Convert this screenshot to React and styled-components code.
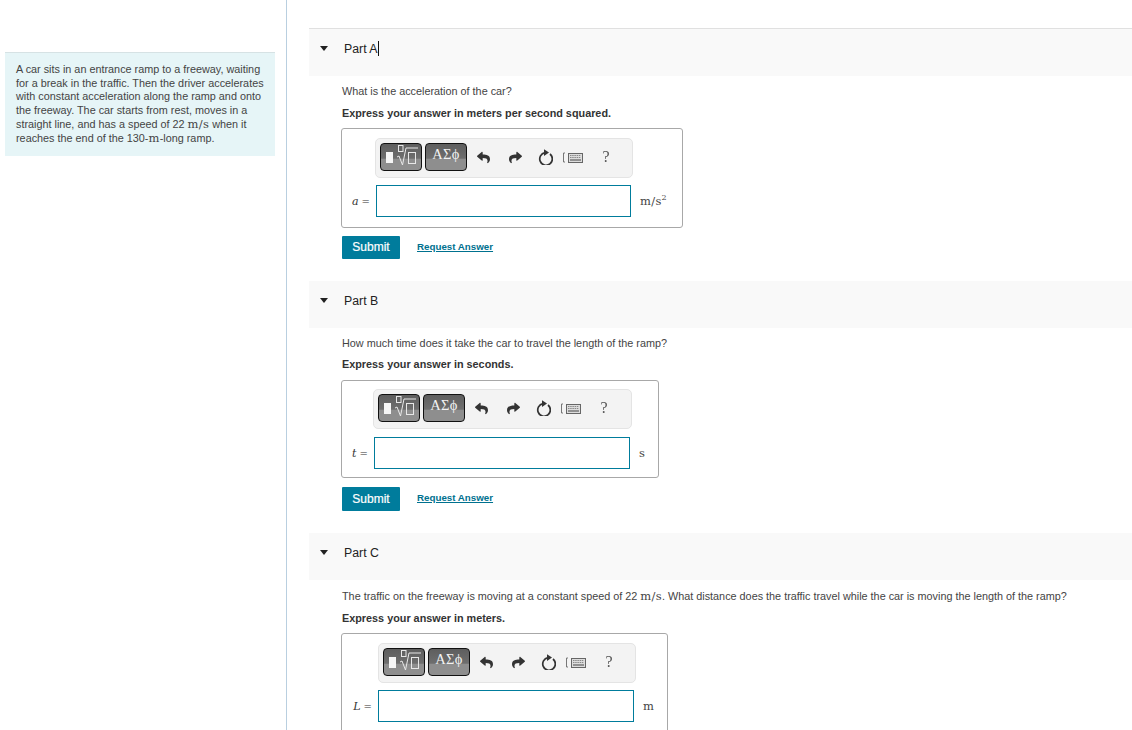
import React from 'react';
import styled, {createGlobalStyle} from 'styled-components';
import {FaReply, FaShare} from 'react-icons/fa';

const Global = createGlobalStyle`
    html, body {
        margin:0;
        height:730px;
        overflow:hidden;
        background:white;
        font-family:"Liberation Sans", Arial, sans-serif;
    }
`
const Page = styled.div`
    display:flex;
    height:730px;
`
const Sidebar = styled.aside`
    width:287px;
    height:100%;
    padding:52px 11px 0 5px;
    box-sizing:border-box;
    border-right:1px solid #b9cfe0;
    flex-shrink:0;
`
const Intro = styled.div`
    background:#e6f5f7;
    border-top:1px solid #d6e2e4;
    padding:10px 11px 10px;
    font-size:10.83px;
    line-height:13.5px;
    color:#444;
`
const Main = styled.main`
    flex:1;
    padding:28px 0 0 22px;
    min-width:0;
`
const Section = styled.section`
    margin-bottom:${props => props.$gap}px;
`
const PartHeader = styled.div`
    box-sizing:border-box;
    height:${props => props.$first ? 48 : 47}px;
    display:flex;
    align-items:center;
    background:#f9f9f9;
    border-top:${props => props.$first ? '1px solid #e0e0e0' : 'none'};
    padding:0 0 8px 11px;
    font-size:12.3px;
    color:#222;
`
const Caret = styled.span`
    width:0;
    height:0;
    border-left:4.5px solid transparent;
    border-right:4.5px solid transparent;
    border-top:5px solid #222;
    margin-right:16px;
`
const Cursor = styled.span`
    display:inline-block;
    width:1px;
    height:15px;
    background:#111;
    vertical-align:-3px;
`
const Body = styled.div`
    padding:${props => props.$top}px 0 0 33px;
`
const Question = styled.p`
    margin:0 0 ${props => props.$after}px;
    font-size:10.83px;
    line-height:13px;
    color:#444;
`
const Instruction = styled.p`
    margin:0 0 ${props => props.$after}px;
    font-size:10.83px;
    line-height:13px;
    font-weight:bold;
    color:#333;
`
const AnswerBox = styled.div`
    box-sizing:border-box;
    width:${props => props.$width}px;
    margin-left:-1px;
    border:1px solid #a8a8a8;
    border-radius:3px;
    padding:${props => props.$pad}px 0 ${props => props.$bottom}px;
    display:grid;
    grid-template-columns:${props => props.$label}px auto 1fr;
    row-gap:${props => props.$rowGap}px;
    background:white;
`
const Toolbar = styled.div`
    grid-column:2 / 4;
    box-sizing:border-box;
    width:${props => props.$width}px;
    height:40px;
    background:#f3f3f3;
    border:1px solid #e4e4e4;
    border-radius:5px;
    display:flex;
    align-items:center;
    padding:0 0 2px 4px;
    margin-left:${props => props.$shift}px;
`
const PaletteBtn = styled.div`
    box-sizing:border-box;
    width:42px;
    height:28px;
    margin-right:3px;
    border:1px solid #111;
    border-radius:4px;
    background:linear-gradient(#5e5e5e 0, #6e6e6e 55%, #8e8e8e 58%, #8e8e8e 100%);
    color:#f2f2f2;
    display:flex;
    align-items:flex-start;
    justify-content:center;
    overflow:hidden;
`
const Greek = styled.span`
    font-family:"Liberation Serif", serif;
    font-size:14.5px;
    line-height:21px;
    letter-spacing:.4px;
`
const ToolIcon = styled.span`
    width:${props => props.$w}px;
    margin-left:${props => props.$left}px;
    display:flex;
    justify-content:center;
    align-items:center;
    color:#333;
`
const Help = styled.span`
    font-family:"Liberation Serif", serif;
    font-size:16px;
    color:#555;
    opacity:.99;
    will-change:opacity;
`
const VarLabel = styled.div`
    font-family:"DejaVu Serif", serif;
    font-size:10px;
    color:#333;
    text-align:right;
    padding-right:${props => props.$pad}px;
    align-self:center;
    em {
        font-size:11px;
    }
`
const AnswerInput = styled.div`
    box-sizing:border-box;
    width:${props => props.$width}px;
    height:32px;
    border:1px solid #007c9c;
    background:white;
`
const Unit = styled.div`
    font-family:"DejaVu Serif", serif;
    font-size:11.5px;
    letter-spacing:.3px;
    color:#444;
    align-self:center;
    padding-left:9px;
    sup {
        font-size:8px;
        line-height:0;
    }
`
const Actions = styled.div`
    display:flex;
    align-items:center;
    margin-top:${props => props.$top}px;
`
const Submit = styled.button`
    width:58px;
    height:${props => props.$height}px;
    border:0;
    border-radius:1px;
    background:#007c9c;
    color:white;
    font:12px "Liberation Sans", Arial, sans-serif;
    -webkit-text-stroke:.2px white;
    padding:0 0 1px;
`
const RequestLink = styled.a`
    margin:0 0 3px 17px;
    font-size:9.75px;
    font-weight:bold;
    color:#00718f;
    text-decoration:underline;
`
const MathText = styled.span`
    font-family:"DejaVu Serif", serif;
    font-size:11.5px;
    letter-spacing:.3px;
    line-height:${props => props.$lh || 13}px;
`

const TemplateIcon = () => (
    <svg width="40" height="26" viewBox="0 0 40 26">
        <rect x="5" y="8" width="7" height="11" fill="#f6f6f6"/>
        <rect x="17.5" y="1.5" width="4.5" height="6" fill="none" stroke="#e8e8e8"/>
        <path d="M16 13 l2 -1 l3.5 9 l3.5 -17 h12" fill="none" stroke="#e8e8e8"/>
        <rect x="27.5" y="8.5" width="7" height="11" fill="none" stroke="#e8e8e8"/>
    </svg>
)

const ResetIcon = () => (
    <svg width="15" height="16" viewBox="0 0 15 16">
        <path d="M12 5 A6.3 6.3 0 1 1 7 3.7" fill="none" stroke="#333" strokeWidth="1.7"/>
        <path d="M6 .2 L11 3.6 L6 7 Z" fill="#333"/>
    </svg>
)

const KeyboardIcon = () => (
    <svg width="20" height="11" viewBox="0 0 20 11">
        <path d="M2 1 H.5 V10 H2" fill="none" stroke="#777"/>
        <rect x="5.5" y="1.5" width="14" height="9" fill="#ddd" stroke="#666"/>
        <path d="M7 3.5 H18 M7 5.5 H18" stroke="#888" strokeDasharray="1.5 .7"/>
        <path d="M7 8 H18" stroke="#777" strokeWidth="1.5"/>
    </svg>
)

const parts = [
    {
        name:'Part A', first:true, gap:22, top:9, qAfter:9, iAfter:8,
        question:'What is the acceleration of the car?',
        instruction:'Express your answer in meters per second squared.',
        boxWidth:342, labelWidth:34, labelPad:6, inputWidth:255, symbol:'a',
        pad:9, rowGap:7, bottom:10, toolbarWidth:258, toolbarShift:-1,
        unit:<>m/s<sup>2</sup></>, actionTop:8, submitHeight:23,
    },
    {
        name:'Part B', gap:22, top:9, qAfter:8, iAfter:9,
        question:'How much time does it take the car to travel the length of the ramp?',
        instruction:'Express your answer in seconds.',
        boxWidth:318, labelWidth:32, labelPad:6, inputWidth:256, symbol:'t',
        pad:8, rowGap:8, bottom:8, toolbarWidth:259, toolbarShift:-1,
        unit:'s', actionTop:9, submitHeight:24,
    },
    {
        name:'Part C', gap:0, top:10, qAfter:9, iAfter:8,
        question:<>The traffic on the freeway is moving at a constant speed of 22 <MathText>m/s</MathText>. What distance does the traffic travel while the car is moving the length of the ramp?</>,
        instruction:'Express your answer in meters.',
        boxWidth:327, labelWidth:36, labelPad:6, inputWidth:256, symbol:'L',
        pad:9, rowGap:7, bottom:10, toolbarWidth:258, toolbarShift:0,
        unit:'m', actionTop:8, submitHeight:23,
    },
]

const Part = ({part}) => (
    <Section $gap={part.gap}>
        <PartHeader $first={part.first}>
            <Caret/>
            <span>{part.name}{part.first && <Cursor/>}</span>
        </PartHeader>
        <Body $top={part.top}>
            <Question $after={part.qAfter}>{part.question}</Question>
            <Instruction $after={part.iAfter}>{part.instruction}</Instruction>
            <AnswerBox $width={part.boxWidth} $label={part.labelWidth} $pad={part.pad} $rowGap={part.rowGap} $bottom={part.bottom}>
                <Toolbar $width={part.toolbarWidth} $shift={part.toolbarShift}>
                    <PaletteBtn><TemplateIcon/></PaletteBtn>
                    <PaletteBtn><Greek>ΑΣϕ</Greek></PaletteBtn>
                    <ToolIcon $w={14} $left={6}><FaReply size={13}/></ToolIcon>
                    <ToolIcon $w={14} $left={18}><FaShare size={13}/></ToolIcon>
                    <ToolIcon $w={15} $left={16}><ResetIcon/></ToolIcon>
                    <ToolIcon $w={20} $left={10}><KeyboardIcon/></ToolIcon>
                    <ToolIcon $w={8} $left={19}><Help>?</Help></ToolIcon>
                </Toolbar>
                <VarLabel $pad={part.labelPad}><em>{part.symbol}</em> =</VarLabel>
                <AnswerInput $width={part.inputWidth}/>
                <Unit>{part.unit}</Unit>
            </AnswerBox>
            <Actions $top={part.actionTop}>
                <Submit $height={part.submitHeight}>Submit</Submit>
                <RequestLink>Request Answer</RequestLink>
            </Actions>
        </Body>
    </Section>
)

const App = () => (
    <Page>
        <Global/>
        <Sidebar>
            <Intro>
                A car sits in an entrance ramp to a freeway, waiting for a break in the traffic. Then the driver accelerates with constant acceleration along the ramp and onto the freeway. The car starts from rest, moves in a straight line, and has a speed of 22 <MathText $lh={15}>m/s</MathText> when it reaches the end of the 130-<MathText>m</MathText>-long ramp.
            </Intro>
        </Sidebar>
        <Main>
            {parts.map(part => <Part key={part.name} part={part}/>)}
        </Main>
    </Page>
)

export default App
